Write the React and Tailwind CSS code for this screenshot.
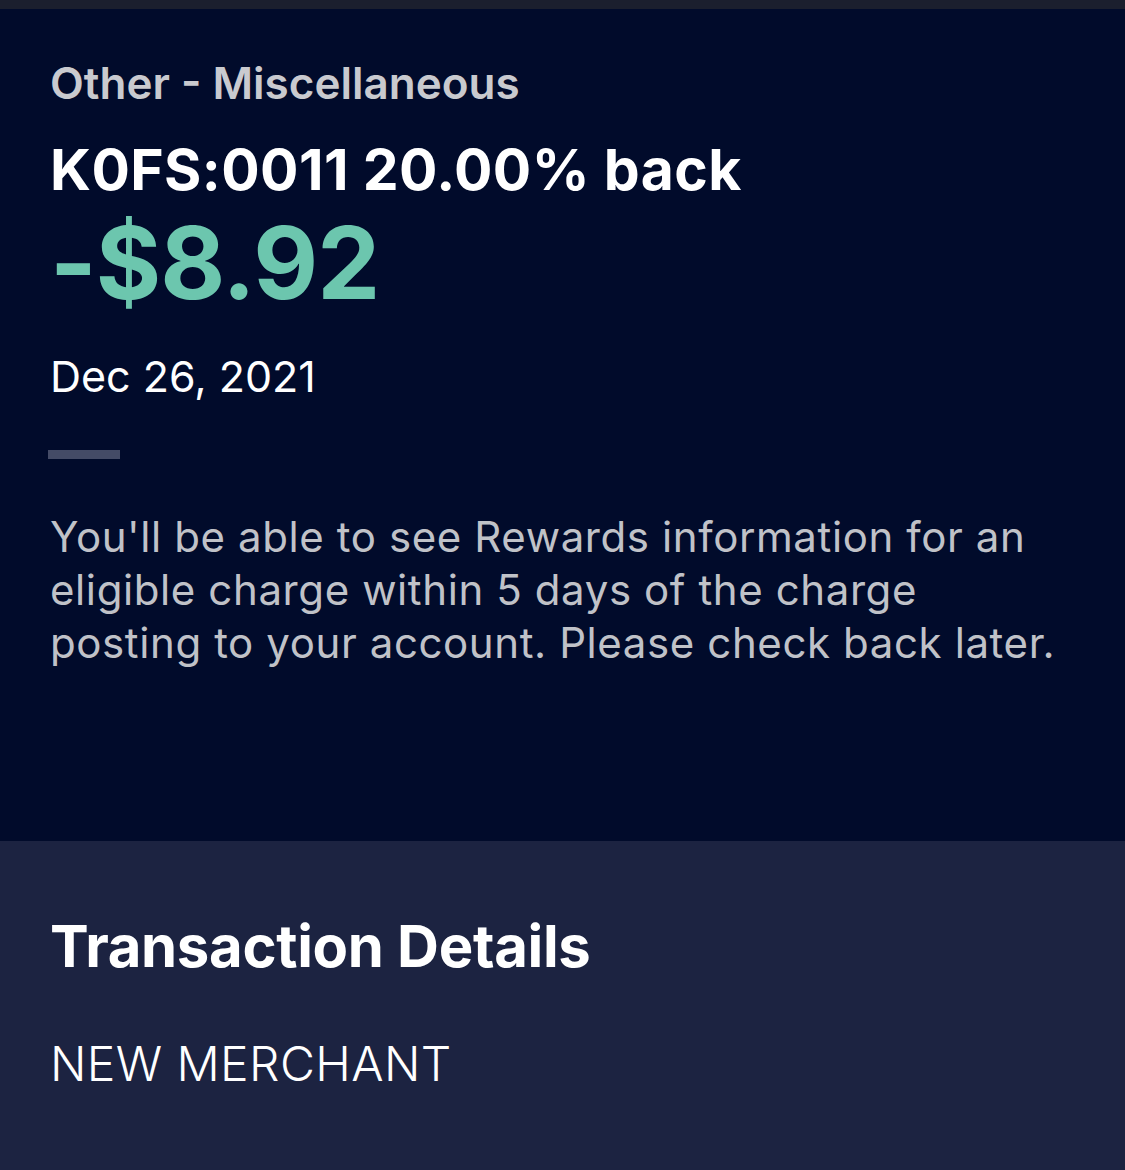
export default function App() {
  return (
    <div className="w-[1125px] h-[1170px] overflow-hidden bg-[#1c2341]" style={{ fontFamily: 'Inter, "Noto Sans", sans-serif' }}>
      <div className="h-[9px] bg-[#1b1f2e]" />
      <div className="bg-[#010b2b] h-[832px] pl-[50px] pr-[40px] pt-[48px] flex flex-col">
        <div className="text-[44px] leading-[52px] font-semibold text-[#c9cacf]">Other - Miscellaneous</div>
        <div className="mt-[27px] text-[57px] leading-[68px] font-bold text-white tracking-[0.4px]">K0FS:0011 20.00% back</div>
        <div className="mt-[4px] text-[100px] leading-[110px] font-bold text-[#6cc6ae] tracking-[-1px]">-$8.92</div>
        <div className="mt-[33px] text-[43px] leading-[50px] font-normal text-white">Dec 26, 2021</div>
        <div className="mt-[49px] w-[72px] h-[9px] bg-[#444b66] -ml-[2px]" />
        <p className="mt-[51px] text-[42px] leading-[53px] font-normal text-[#c0c2c8] tracking-[0.6px] whitespace-nowrap">
          You'll be able to see Rewards information for an<br />
          eligible charge within 5 days of the charge<br />
          posting to your account. Please check back later.
        </p>
      </div>
      <div className="pl-[50px] pt-[70px]">
        <div className="text-[58px] leading-[70px] font-bold text-white tracking-[-0.3px]">Transaction Details</div>
        <div className="mt-[55px] text-[48px] leading-[56px] font-light text-white tracking-[0.4px]">NEW MERCHANT</div>
      </div>
    </div>
  );
}
